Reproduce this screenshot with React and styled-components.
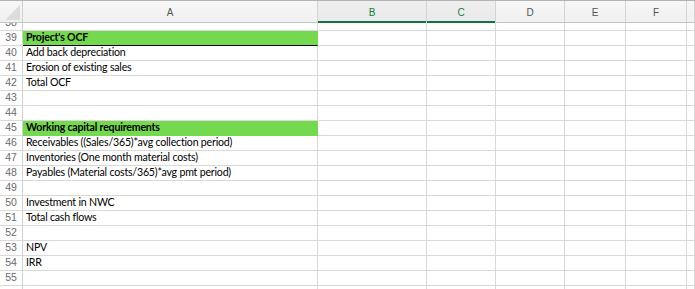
import styled, { createGlobalStyle } from "styled-components";

const GlobalStyle = createGlobalStyle`
  html, body {
    margin: 0;
    padding: 0;
    background: #ffffff;
    overflow: hidden;
  }
`;

const columns = [
  { name: "A", width: 295 },
  { name: "B", width: 109, selected: true },
  { name: "C", width: 69, selected: true },
  { name: "D", width: 69 },
  { name: "E", width: 61 },
  { name: "F", width: 61 },
];

const rows = [
  { n: 38, height: 8 },
  { n: 39, text: "Project's OCF", fill: true, bold: true, underline: true },
  { n: 40, text: "Add back depreciation" },
  { n: 41, text: "Erosion of existing sales" },
  { n: 42, text: "Total OCF" },
  { n: 43 },
  { n: 44 },
  { n: 45, text: "Working capital requirements", fill: true, bold: true },
  { n: 46, text: "Receivables ((Sales/365)*avg collection period)" },
  { n: 47, text: "Inventories (One month material costs)" },
  { n: 48, text: "Payables (Material costs/365)*avg pmt period)" },
  { n: 49 },
  { n: 50, text: "Investment in NWC" },
  { n: 51, text: "Total cash flows" },
  { n: 52 },
  { n: 53, text: "NPV" },
  { n: 54, text: "IRR" },
  { n: 55 },
  { n: 56, hideNum: true },
];

const template = `23px ${columns.map((c) => c.width + "px").join(" ")} 1fr`;

function Spreadsheet() {
  return (
    <Sheet>
      <HeaderRow>
        <Corner />
        {columns.map((c) => (
          <ColHeader key={c.name} $selected={c.selected}>
            {c.name}
          </ColHeader>
        ))}
        <ColHeader />
      </HeaderRow>
      {rows.map((r) => (
        <Row key={r.n} $height={r.height || 15}>
          <RowNum>{r.hideNum ? "" : r.n}</RowNum>
          <Cell $fill={r.fill} $bold={r.bold} $underline={r.underline}>
            {r.text}
          </Cell>
          {columns.slice(1).map((c) => (
            <Cell key={c.name} />
          ))}
          <Cell />
        </Row>
      ))}
    </Sheet>
  );
}

export default function App() {
  return (
    <>
      <GlobalStyle />
      <Spreadsheet />
    </>
  );
}

const Sheet = styled.div`
  width: 695px;
  height: 289px;
  overflow: hidden;
  background: #ffffff;
`;

const HeaderRow = styled.div`
  display: grid;
  grid-template-columns: ${template};
  height: 23px;
  box-sizing: border-box;
  border-top: 1px solid #b4b4b4;
  border-bottom: 1px solid #c4c4c4;
  background: linear-gradient(#f7f7f7, #f0f0f0);
`;

const Corner = styled.div`
  position: relative;
  border-right: 1px solid #d0d0d0;
  &::after {
    content: "";
    position: absolute;
    right: 2px;
    bottom: 2px;
    width: 0;
    height: 0;
    border-left: 15px solid transparent;
    border-bottom: 15px solid #dcdcdc;
  }
`;

const ColHeader = styled.div`
  display: flex;
  align-items: center;
  justify-content: center;
  box-sizing: border-box;
  border-right: 1px solid #d4d4d4;
  font-family: "Liberation Sans", Arial, sans-serif;
  font-size: 10px;
  padding-top: 1px;
  color: ${(p) => (p.$selected ? "#137a46" : "#555555")};
  background: ${(p) => (p.$selected ? "linear-gradient(#efefef, #e9e9e9)" : "transparent")};
  box-shadow: ${(p) => (p.$selected ? "inset 0 -2px 0 #127443" : "none")};
  margin-bottom: ${(p) => (p.$selected ? "-1px" : "0")};
`;

const Row = styled.div`
  display: grid;
  grid-template-columns: ${template};
  height: ${(p) => p.$height}px;
  overflow: hidden;
  align-items: end;
`;

const RowNum = styled.div`
  height: 100%;
  overflow: hidden;
  box-sizing: border-box;
  border-right: 1px solid #d0d0d0;
  border-bottom: 1px solid #d9d9d9;
  display: flex;
  align-items: flex-end;
  justify-content: center;
  padding-bottom: 1px;
  font-family: "Liberation Sans", Arial, sans-serif;
  font-size: 10.5px;
  line-height: 13px;
  color: #6a6a6a;
`;

const Cell = styled.div`
  height: 100%;
  box-sizing: border-box;
  border-right: 1px solid ${(p) => (p.$fill ? "#74d94f" : "#d9d9d9")};
  border-bottom: 1px solid ${(p) => (p.$underline ? "#000000" : p.$fill ? "#74d94f" : "#d9d9d9")};
  background: ${(p) => (p.$fill ? "#74d94f" : "transparent")};
  display: flex;
  align-items: flex-end;
  padding: 0 0 1px 3px;
  font-family: Lato, "Open Sans", sans-serif;
  font-size: 10.6px;
  letter-spacing: -0.2px;
  line-height: 13px;
  font-weight: ${(p) => (p.$bold ? 700 : 400)};
  color: #000000;
  white-space: nowrap;
  overflow: visible;
`;
